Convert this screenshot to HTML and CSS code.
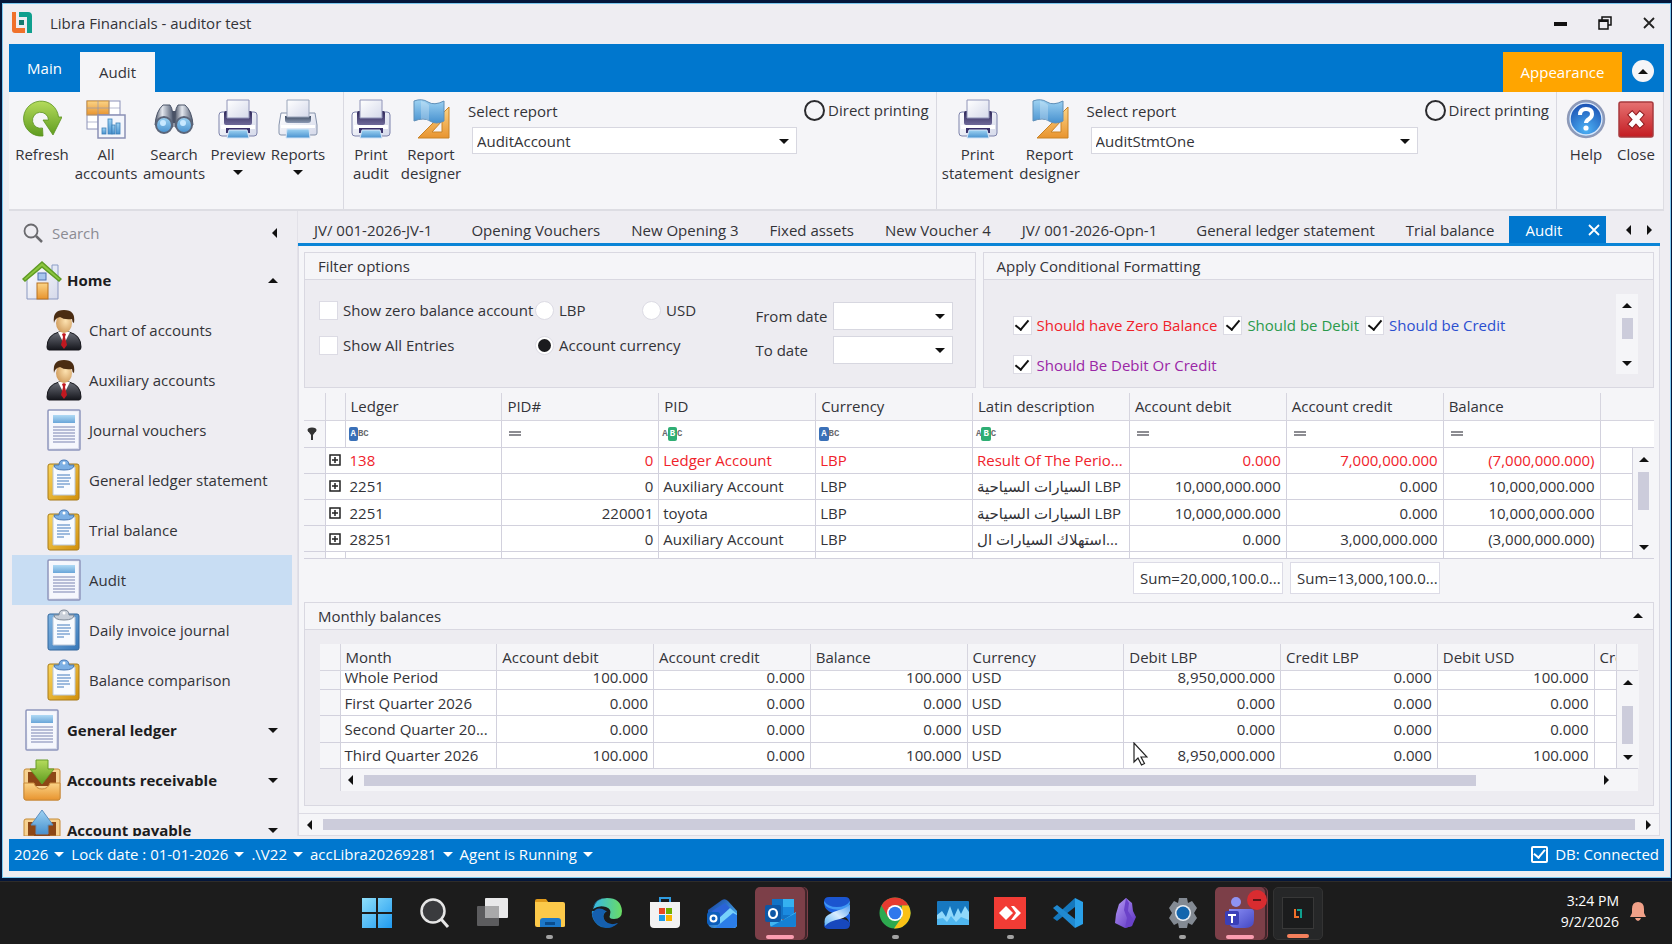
FILE: index.html
```html
<!DOCTYPE html>
<html lang="en">
<head>
<meta charset="utf-8">
<title>Libra Financials - auditor test</title>
<link rel="stylesheet" href="styles.css">
</head>
<body>
<svg class="defs" aria-hidden="true">
  <defs>
    <linearGradient id="gGreen" x1="0" y1="0" x2="0" y2="1"><stop offset="0" stop-color="#b5db5c"/><stop offset="1" stop-color="#5f9c1f"/></linearGradient>
    <linearGradient id="gPaper" x1="0" y1="0" x2="1" y2="1"><stop offset="0" stop-color="#ffffff"/><stop offset="1" stop-color="#d5d9ea"/></linearGradient>
    <linearGradient id="gBlue" x1="0" y1="0" x2="0" y2="1"><stop offset="0" stop-color="#9fd3f3"/><stop offset="1" stop-color="#4791cf"/></linearGradient>
    <linearGradient id="gDark" x1="0" y1="0" x2="0" y2="1"><stop offset="0" stop-color="#2d2657"/><stop offset="1" stop-color="#6f6a99"/></linearGradient>
    <linearGradient id="gSlate" x1="0" y1="0" x2="0" y2="1"><stop offset="0" stop-color="#3f4c63"/><stop offset="1" stop-color="#8b99b3"/></linearGradient>
    <linearGradient id="gSteel" x1="0" y1="0" x2="1" y2="0"><stop offset="0" stop-color="#4b5365"/><stop offset=".4" stop-color="#e4e8ef"/><stop offset="1" stop-color="#4d586e"/></linearGradient>
    <linearGradient id="gOrange" x1="0" y1="0" x2="0" y2="1"><stop offset="0" stop-color="#fbd487"/><stop offset="1" stop-color="#e8942f"/></linearGradient>
    <linearGradient id="gGold" x1="0" y1="0" x2="1" y2="1"><stop offset="0" stop-color="#fbd65c"/><stop offset="1" stop-color="#d08f0c"/></linearGradient>
    <linearGradient id="gClipBlue" x1="0" y1="0" x2="1" y2="1"><stop offset="0" stop-color="#7fb4e2"/><stop offset="1" stop-color="#3777b8"/></linearGradient>
    <linearGradient id="gRed" x1="0" y1="0" x2="0" y2="1"><stop offset="0" stop-color="#e67272"/><stop offset="1" stop-color="#c31c22"/></linearGradient>
    <radialGradient id="gHelp" cx=".5" cy=".8" r=".8"><stop offset="0" stop-color="#4db2f5"/><stop offset="1" stop-color="#1748ad"/></radialGradient>
    <radialGradient id="gFace" cx=".6" cy=".4" r=".6"><stop offset="0" stop-color="#fde2b0"/><stop offset="1" stop-color="#d3a163"/></radialGradient>
    <linearGradient id="gSuit" x1="0" y1="0" x2="0" y2="1"><stop offset="0" stop-color="#6b6e78"/><stop offset="1" stop-color="#15161c"/></linearGradient>
    <linearGradient id="gWin" x1="0" y1="0" x2="1" y2="1"><stop offset="0" stop-color="#8fe0fb"/><stop offset="1" stop-color="#1f9af0"/></linearGradient>
    <linearGradient id="gEdge" x1="0" y1="0" x2="1" y2="1"><stop offset="0" stop-color="#2aa3e0"/><stop offset="1" stop-color="#0a4a94"/></linearGradient>
    <linearGradient id="gEdge2" x1="0" y1="0" x2="1" y2="0"><stop offset="0" stop-color="#35b7e8"/><stop offset="1" stop-color="#6bdd62"/></linearGradient>
    <linearGradient id="gViolet" x1="0" y1="0" x2="1" y2="1"><stop offset="0" stop-color="#b79cf5"/><stop offset="1" stop-color="#5a2fc0"/></linearGradient>
    <linearGradient id="gTeams" x1="0" y1="0" x2="1" y2="1"><stop offset="0" stop-color="#8b8ff5"/><stop offset="1" stop-color="#4347c4"/></linearGradient>
    <linearGradient id="gMail" x1="0" y1="0" x2="1" y2="1"><stop offset="0" stop-color="#123a9e"/><stop offset="1" stop-color="#55c3fb"/></linearGradient>
    <linearGradient id="gHelix" x1="0" y1="1" x2="1" y2="0"><stop offset="0" stop-color="#5cb4f8"/><stop offset=".5" stop-color="#d8ecfd"/><stop offset="1" stop-color="#4b9bf2"/></linearGradient>
  </defs>
  <symbol id="logo" viewBox="0 0 22 22"><path d="M1 0h4v16h9v5H4q-3 0-3-3z" fill="#f0702a"/><path d="M8 0h9q4 0 4 4v17h-5V5H8z" fill="#0f9f8e"/><rect x="8" y="8" width="5" height="5" fill="#14796f"/></symbol>
  <symbol id="refresh" viewBox="0 0 40 40"><path d="M21 37A17.500 17.500 0 1 1 36.500 18H40L31 36 21 21h5.500a8 8 0 1 0-6 8z" fill="url(#gGreen)" stroke="#5a9220" stroke-width=".8"/></symbol>
  <symbol id="allacc" viewBox="0 0 40 40"><rect x="1" y="2" width="33" height="28" fill="#fff" stroke="#8c92b8"/><rect x="1" y="2" width="22" height="14" fill="url(#gOrange)" stroke="#cf9034"/><path d="M1 9h33M1 16h33M1 23h33M12 2v28M23 2v28" stroke="#8c92b8" stroke-width=".9" fill="none" opacity=".7"/><rect x="12" y="16" width="27" height="23" fill="#f4f6fc" stroke="#8a90b5" stroke-width="1.500"/><g fill="url(#gBlue)" stroke="#3c7fb8" stroke-width=".8"><rect x="16" y="29" width="4" height="6"/><rect x="22" y="20" width="4" height="15"/><rect x="26" y="26" width="3" height="9"/><rect x="30" y="24" width="4" height="11"/></g></symbol>
  <symbol id="binoc" viewBox="0 0 40 40"><rect x="15" y="12" width="10" height="12" fill="#4a5264"/><path d="M9 6h7q4 5 3 22L1 26Q2 12 9 6z" fill="url(#gSteel)" stroke="#4b5468"/><path d="M31 6h-7q-4 5-3 22l18-2Q38 12 31 6z" fill="url(#gSteel)" stroke="#4b5468"/><g fill="url(#gBlue)" stroke="#5b6579" stroke-width="2"><circle cx="10" cy="26" r="8"/><circle cx="30" cy="26" r="8"/></g><circle cx="9" cy="24" r="3" fill="#c7e8ff"/><circle cx="29" cy="24" r="3" fill="#c7e8ff"/></symbol>
  <symbol id="printer" viewBox="0 0 40 40"><rect x="1" y="13" width="38" height="24" rx="3" fill="url(#gPaper)" stroke="#7d82ab"/><rect x="6" y="12" width="28" height="14" rx="2" fill="url(#gDark)"/><path d="M9 1h22v18H9z" fill="url(#gPaper)" stroke="#9094b8"/><path d="M3 26h34v4H3z" fill="#fff"/><path d="M8 29h24v5H8z" fill="#393069"/><path d="M11 31h18l2 8H9z" fill="url(#gBlue)" stroke="#d4e4f6"/></symbol>
  <symbol id="printer2" viewBox="0 0 40 40"><path d="M3 14h34l2 12v8q0 2-2 2H3q-2 0-2-2v-8z" fill="url(#gPaper)" stroke="#8592ab"/><path d="M7 17h26v4q0 3-3 3H10q-3 0-3-3z" fill="url(#gSlate)"/><path d="M9 1h22v17H9z" fill="url(#gPaper)" stroke="#9aa5ba"/><path d="M3 26h34v3H3z" fill="#fff"/><path d="M9 30h22l1 9H8z" fill="url(#gBlue)" stroke="#d4e4f6"/></symbol>
  <symbol id="designer" viewBox="0 0 40 40"><path d="M38 8v31H7z" fill="url(#gOrange)" stroke="#c98327"/><path d="M31 22v11H21z" fill="#f5f5f8" stroke="#c98327"/><path d="M3 2q8-3 14 1t16-1v20q-8 4-14 0T3 22z" fill="url(#gBlue)" stroke="#5f8fb8"/><path d="M10 2q5 1 8 4v16q-4-3-8-2z" fill="#fff" opacity=".25"/></symbol>
  <symbol id="help" viewBox="0 0 40 40"><circle cx="20" cy="20" r="18" fill="url(#gHelp)" stroke="#8e9ab8" stroke-width="2.500"/><circle cx="20" cy="20" r="16" fill="none" stroke="#dce8f8" stroke-width="1.500"/><path d="M14 16q0-6 6-6t6 5q0 3-3 5t-3 4" fill="none" stroke="#fff" stroke-width="4"/><circle cx="20" cy="29" r="2.600" fill="#fff"/></symbol>
  <symbol id="close" viewBox="0 0 40 40"><rect x="3" y="3" width="34" height="35" rx="2" fill="url(#gRed)" stroke="#a83a3e" stroke-width="1.500"/><path d="m16 16 8 9m0-9-8 9" stroke="#8d1a1e" stroke-width="7" stroke-linecap="square"/><path d="m16 16 8 9m0-9-8 9" stroke="#fff" stroke-width="5" stroke-linecap="square"/></symbol>
  <symbol id="house" viewBox="0 0 40 42"><path d="M30 6h6v14h-6z" fill="#e3e8f5" stroke="#8b9cc6"/><path d="M5 20 20 5l16 15v20H5z" fill="url(#gPaper)" stroke="#8997c0"/><rect x="15" y="24" width="11" height="16" fill="url(#gOrange)" stroke="#b87220"/><rect x="16" y="14" width="8" height="7" fill="#a8c6ee" stroke="#4f6fae"/><path d="M1 20 20 3l19 17-2 2L20 8 3 22z" fill="#8cc63f" stroke="#5f9b24" stroke-width="1.500"/></symbol>
  <symbol id="person" viewBox="0 0 36 42"><path d="M1 38q0-12 12-15h10q12 3 12 15 0 3-2 3H3q-2 0-2-3z" fill="url(#gSuit)" stroke="#16171c"/><path d="m12 23 6 12 6-12z" fill="#fff"/><path d="m16 25 2-1 2 1-1 3 2 8-3 4-3-4 2-8z" fill="#c01820"/><ellipse cx="18" cy="14" rx="8" ry="10" fill="url(#gFace)"/><path d="M8 14Q6 1 18 1q12 0 10 13-2-1-2-4-8 1-12-2-5 1-6 6z" fill="#4a2c12"/></symbol>
  <symbol id="doc" viewBox="0 0 34 42"><rect x="1" y="1" width="32" height="40" rx="1" fill="url(#gPaper)" stroke="#8f96bd" stroke-width="1.500"/><rect x="3" y="3" width="28" height="36" fill="#f5f7fd"/><rect x="6" y="6" width="22" height="8" fill="url(#gBlue)" opacity=".8"/><path d="M6 18h22M6 21h22M6 24h22M6 27h22M6 30h22M6 33h22" stroke="#a3aaca" stroke-width="1.500"/></symbol>
  <symbol id="clip" viewBox="0 0 34 42"><rect x="1" y="5" width="31" height="36" rx="2" fill="url(#gGold)" stroke="#a87b18"/><path d="M6 8h22v28H6z" fill="#f8fbff" stroke="#b9c6d8"/><path d="M10 16h13M10 19h14M10 22h12M10 25h13M10 28h7" stroke="#7fa6d4" stroke-width="1.500"/><path d="M7 6h5q0-5 5-5t5 5h5q0 5-10 5T7 6z" fill="#7db0e4" stroke="#4779b6"/><circle cx="17" cy="4" r="1.500" fill="#fff"/></symbol>
  <symbol id="clipb" viewBox="0 0 34 42"><rect x="1" y="5" width="31" height="36" rx="2" fill="url(#gClipBlue)" stroke="#33669c"/><path d="M6 8h22v28H6z" fill="#f8fbff" stroke="#b9c6d8"/><path d="M10 16h13M10 19h14M10 22h12M10 25h13M10 28h7" stroke="#7fa6d4" stroke-width="1.500"/><path d="M7 6h5q0-5 5-5t5 5h5q0 5-10 5T7 6z" fill="#c9cfd8" stroke="#7d8896"/><circle cx="17" cy="4" r="1.500" fill="#fff"/></symbol>
  <symbol id="recv" viewBox="0 0 40 42"><rect x="2" y="10" width="36" height="31" rx="2" fill="#f7d291" stroke="#c58a36"/><rect x="6" y="13" width="28" height="14" fill="#8d4716"/><path d="M2 24h10q2 6 8 6t8-6h10v15q0 2-2 2H4q-2 0-2-2z" fill="url(#gOrange)" stroke="#c98a3a"/><path d="M14 1h12v9h6L20 25 8 10h6z" fill="url(#gGreen)" stroke="#679b28"/></symbol>
  <symbol id="pay" viewBox="0 0 40 42"><rect x="2" y="10" width="36" height="31" rx="2" fill="#f7d291" stroke="#c58a36"/><rect x="6" y="13" width="28" height="14" fill="#8d4716"/><path d="M2 27h10q2 6 8 6t8-6h10v12q0 2-2 2H4q-2 0-2-2z" fill="url(#gOrange)" stroke="#c98a3a"/><path d="m20 1 11 15h-5v9H14v-9H9z" fill="url(#gBlue)" stroke="#5d8fc0"/></symbol>
  <symbol id="plus" viewBox="0 0 12 12"><rect x="1" y="1" width="10" height="10" fill="#fff" stroke="#222" stroke-width="1.500"/><path d="M6 3v6M3 6h6" stroke="#222" stroke-width="1.500"/></symbol>
</svg>

<div class="window">
  <header class="titlebar">
    <svg class="logo"><use href="#logo"/></svg>
    <h1>Libra Financials - auditor test</h1>
    <div class="wincontrols">
      <button type="button" aria-label="Minimize"><svg viewBox="0 0 14 14"><path d="M0 8h13" stroke="#111" stroke-width="4"/></svg></button>
      <button type="button" aria-label="Restore"><svg viewBox="0 0 14 14"><path d="M4 4V1h9v8h-3M1 4h9v9H1z" fill="none" stroke="#111" stroke-width="1.500"/><path d="M1 5h9" stroke="#111" stroke-width="2"/></svg></button>
      <button type="button" aria-label="Close window"><svg viewBox="0 0 14 14"><path d="m2 2 10 10m0-10L2 12" stroke="#222" stroke-width="1.800"/></svg></button>
    </div>
  </header>

  <nav class="ribbon-tabs">
    <button type="button" class="rtab main">Main</button>
    <button type="button" class="rtab active">Audit</button>
    <button type="button" class="rtab appearance">Appearance</button>
    <button type="button" class="collapse" aria-label="Collapse ribbon"><i class="tri up"></i></button>
  </nav>

  <section class="ribbon">
    <div class="rgroup g1">
      <button type="button" class="rbtn w60"><svg><use href="#refresh"/></svg><span>Refresh</span></button>
      <button type="button" class="rbtn w68"><svg><use href="#allacc"/></svg><span>All<br>accounts</span></button>
      <button type="button" class="rbtn w68"><svg><use href="#binoc"/></svg><span>Search<br>amounts</span></button>
      <button type="button" class="rbtn w60"><svg><use href="#printer"/></svg><span>Preview</span><i class="tri down"></i></button>
      <button type="button" class="rbtn w60"><svg><use href="#printer2"/></svg><span>Reports</span><i class="tri down"></i></button>
    </div>
    <div class="rgroup g2">
      <button type="button" class="rbtn w54"><svg><use href="#printer"/></svg><span>Print<br>audit</span></button>
      <button type="button" class="rbtn w66"><svg><use href="#designer"/></svg><span>Report<br>designer</span></button>
      <div class="picker"><label for="rep1">Select report</label><div class="combo"><select id="rep1"><option>AuditAccount</option></select><i class="tri down"></i></div></div>
      <label class="direct"><input type="radio" name="d1">Direct printing</label>
    </div>
    <div class="rgroup g3">
      <button type="button" class="rbtn w78"><svg><use href="#printer"/></svg><span>Print<br>statement</span></button>
      <button type="button" class="rbtn w66"><svg><use href="#designer"/></svg><span>Report<br>designer</span></button>
      <div class="picker"><label for="rep2">Select report</label><div class="combo"><select id="rep2"><option>AuditStmtOne</option></select><i class="tri down"></i></div></div>
      <label class="direct"><input type="radio" name="d2">Direct printing</label>
    </div>
    <div class="rgroup g4">
      <button type="button" class="rbtn w50"><svg><use href="#help"/></svg><span>Help</span></button>
      <button type="button" class="rbtn w50"><svg><use href="#close"/></svg><span>Close</span></button>
    </div>
  </section>

  <div class="body">
    <aside class="sidebar">
      <div class="search">
        <svg viewBox="0 0 20 20"><circle cx="8" cy="8" r="6.500" fill="none" stroke="#6a6a6e" stroke-width="1.800"/><path d="m13 13 6 6" stroke="#6a6a6e" stroke-width="2.500"/></svg>
        <input type="text" placeholder="Search" aria-label="Search">
        <button type="button" aria-label="Collapse sidebar"><i class="tri left"></i></button>
      </div>
      <nav class="navlist">
        <button type="button" class="nav top"><svg><use href="#house"/></svg><span>Home</span><i class="tri up"></i></button>
        <a href="#" class="nav"><svg><use href="#person"/></svg><span>Chart of accounts</span></a>
        <a href="#" class="nav"><svg><use href="#person"/></svg><span>Auxiliary accounts</span></a>
        <a href="#" class="nav"><svg><use href="#doc"/></svg><span>Journal vouchers</span></a>
        <a href="#" class="nav"><svg><use href="#clip"/></svg><span>General ledger statement</span></a>
        <a href="#" class="nav"><svg><use href="#clip"/></svg><span>Trial balance</span></a>
        <a href="#" class="nav selected"><svg><use href="#doc"/></svg><span>Audit</span></a>
        <a href="#" class="nav"><svg><use href="#clipb"/></svg><span>Daily invoice journal</span></a>
        <a href="#" class="nav"><svg><use href="#clip"/></svg><span>Balance comparison</span></a>
        <button type="button" class="nav top"><svg><use href="#doc"/></svg><span>General ledger</span><i class="tri down"></i></button>
        <button type="button" class="nav top"><svg><use href="#recv"/></svg><span>Accounts receivable</span><i class="tri down"></i></button>
        <button type="button" class="nav top"><svg><use href="#pay"/></svg><span>Account payable</span><i class="tri down"></i></button>
      </nav>
    </aside>

    <main class="content">
      <nav class="tabs">
        <button type="button" class="voucher">JV/ 001-2026-JV-1</button>
        <button type="button">Opening Vouchers</button>
        <button type="button">New Opening 3</button>
        <button type="button">Fixed assets</button>
        <button type="button">New Voucher 4</button>
        <button type="button" class="voucher">JV/ 001-2026-Opn-1</button>
        <button type="button">General ledger statement</button>
        <button type="button">Trial balance</button>
        <button type="button" class="active">Audit <svg viewBox="0 0 12 12"><path d="m1 1 10 10M11 1 1 11" stroke="#fff" stroke-width="1.800"/></svg></button>
        <button type="button" class="arrow first" aria-label="Previous tabs"><i class="tri left"></i></button>
        <button type="button" class="arrow" aria-label="Next tabs"><i class="tri right"></i></button>
      </nav>

      <div class="page">
        <div class="panels">
          <section class="panel">
            <h2>Filter options</h2>
            <div class="filter">
              <div class="stack">
                <label class="opt"><input type="checkbox">Show zero balance account</label>
                <label class="opt"><input type="checkbox">Show All Entries</label>
              </div>
              <div class="stack">
                <div class="pair"><label class="opt"><input type="radio" name="cur">LBP</label><label class="opt"><input type="radio" name="cur">USD</label></div>
                <label class="opt"><input type="radio" name="cur" checked>Account currency</label>
              </div>
              <div class="dates">
                <label for="from">From date</label><div class="combo"><select id="from"><option></option></select><i class="tri down"></i></div>
                <label for="to">To date</label><div class="combo"><select id="to"><option></option></select><i class="tri down"></i></div>
              </div>
            </div>
          </section>
          <section class="panel">
            <h2>Apply Conditional Formatting</h2>
            <div class="formatting">
              <div class="rules">
                <label class="opt red"><input type="checkbox" checked>Should have Zero Balance</label>
                <label class="opt green"><input type="checkbox" checked>Should be Debit</label>
                <label class="opt blue"><input type="checkbox" checked>Should be Credit</label>
                <label class="opt purple"><input type="checkbox" checked>Should Be Debit Or Credit</label>
              </div>
              <div class="vscroll"><i class="tri up"></i><i class="thumb short"></i><i class="tri down"></i></div>
            </div>
          </section>
        </div>

        <table class="grid accounts">
          <colgroup><col class="c21"><col class="c20"><col><col><col><col><col><col><col><col><col class="c32"><col class="c22"></colgroup>
          <thead>
            <tr><th></th><th></th><th>Ledger</th><th>PID#</th><th>PID</th><th>Currency</th><th>Latin description</th><th>Account debit</th><th>Account credit</th><th>Balance</th><th colspan="2" class="last"></th></tr>
            <tr class="frow"><td class="ind"><svg class="funnel" viewBox="0 0 10 14"><ellipse cx="5" cy="3" rx="4.500" ry="2.500" fill="#333"/><path d="M1 4h8L6 8v5H4V8z" fill="#333"/></svg></td><td></td><td><span class="abc"><b class="fb">A</b>BC</span></td><td><span class="eq"></span></td><td><span class="abc">A<b class="fg">B</b>C</span></td><td><span class="abc"><b class="fb">A</b>BC</span></td><td><span class="abc">A<b class="fg">B</b>C</span></td><td><span class="eq"></span></td><td><span class="eq"></span></td><td><span class="eq"></span></td><td colspan="2" class="last"></td></tr>
          </thead>
          <tbody>
            <tr class="red"><td class="ind"></td><td class="exp"><svg><use href="#plus"/></svg></td><td>138</td><td class="n">0</td><td>Ledger Account</td><td>LBP</td><td>Result Of The Perio...</td><td class="n">0.000</td><td class="n">7,000,000.000</td><td class="n">(7,000,000.000)</td><td></td><td rowspan="5" class="sb"><div class="vscroll tall"><i class="tri up"></i><i class="thumb"></i><i class="tri down"></i></div></td></tr>
            <tr><td class="ind"></td><td class="exp"><svg><use href="#plus"/></svg></td><td>2251</td><td class="n">0</td><td>Auxiliary Account</td><td>LBP</td><td>السيارات السياحية LBP</td><td class="n">10,000,000.000</td><td class="n">0.000</td><td class="n">10,000,000.000</td><td></td></tr>
            <tr><td class="ind"></td><td class="exp"><svg><use href="#plus"/></svg></td><td>2251</td><td class="n">220001</td><td>toyota</td><td>LBP</td><td>السيارات السياحية LBP</td><td class="n">10,000,000.000</td><td class="n">0.000</td><td class="n">10,000,000.000</td><td></td></tr>
            <tr><td class="ind"></td><td class="exp"><svg><use href="#plus"/></svg></td><td>28251</td><td class="n">0</td><td>Auxiliary Account</td><td>LBP</td><td>استهلاك السيارات ال...</td><td class="n">0.000</td><td class="n">3,000,000.000</td><td class="n">(3,000,000.000)</td><td></td></tr>
            <tr class="stub"><td class="ind"></td><td></td><td></td><td></td><td></td><td></td><td></td><td></td><td></td><td></td><td></td></tr>
          </tbody>
        </table>
        <div class="sums">
          <output class="sum s1">Sum=20,000,100.0...</output>
          <output class="sum s2">Sum=13,000,100.0...</output>
        </div>

        <section class="panel monthly">
          <h2>Monthly balances<i class="tri up"></i></h2>
          <div class="mbody">
            <table class="grid months">
              <colgroup><col class="c20"><col><col><col><col><col><col><col><col><col class="c22"><col class="c22"></colgroup>
              <thead><tr><th></th><th>Month</th><th>Account debit</th><th>Account credit</th><th>Balance</th><th>Currency</th><th>Debit LBP</th><th>Credit LBP</th><th>Debit USD</th><th class="cut">Credit USD</th><th class="last"></th></tr></thead>
              <tbody>
                <tr class="clipped"><td class="ind"></td><td><div>Whole Period</div></td><td class="n"><div>100.000</div></td><td class="n"><div>0.000</div></td><td class="n"><div>100.000</div></td><td><div>USD</div></td><td class="n"><div>8,950,000.000</div></td><td class="n"><div>0.000</div></td><td class="n"><div>100.000</div></td><td></td><td rowspan="4" class="sb"><div class="vscroll mid"><i class="tri up"></i><i class="thumb"></i><i class="tri down"></i></div></td></tr>
                <tr><td class="ind"></td><td>First Quarter 2026</td><td class="n">0.000</td><td class="n">0.000</td><td class="n">0.000</td><td>USD</td><td class="n">0.000</td><td class="n">0.000</td><td class="n">0.000</td><td></td></tr>
                <tr><td class="ind"></td><td>Second Quarter 20...</td><td class="n">0.000</td><td class="n">0.000</td><td class="n">0.000</td><td>USD</td><td class="n">0.000</td><td class="n">0.000</td><td class="n">0.000</td><td></td></tr>
                <tr><td class="ind"></td><td>Third Quarter 2026</td><td class="n">100.000</td><td class="n">0.000</td><td class="n">100.000</td><td>USD</td><td class="n">8,950,000.000</td><td class="n">0.000</td><td class="n">100.000</td><td></td></tr>
              </tbody>
            </table>
            <div class="hscroll inner"><i class="tri left"></i><i class="track"><i class="bar"></i></i><i class="tri right"></i></div>
          </div>
        </section>
      </div>
      <div class="hscroll outer"><i class="tri left"></i><i class="track"><i class="bar"></i></i><i class="tri right"></i></div>
    </main>
  </div>

  <footer class="status">
    <button type="button">2026<i class="tri down"></i></button>
    <button type="button">Lock date : 01-01-2026<i class="tri down"></i></button>
    <button type="button">.\V22<i class="tri down"></i></button>
    <button type="button">accLibra20269281<i class="tri down"></i></button>
    <button type="button">Agent is Running<i class="tri down"></i></button>
    <label class="db"><input type="checkbox" checked>DB: Connected</label>
  </footer>
</div>

<svg class="cursor" viewBox="0 0 15 24" aria-hidden="true"><path d="M1 1v19l4-4 3.500 7 3-1.500L8 15h6z" fill="#fff" stroke="#222" stroke-width="1.200"/></svg>

<div class="taskbar">
  <div class="apps">
    <button type="button" aria-label="Start"><svg viewBox="0 0 32 32"><path d="M1 1h14v14H1zM17 1h14v14H17zM1 17h14v14H1zM17 17h14v14H17z" fill="url(#gWin)"/></svg></button>
    <button type="button" aria-label="Search Windows"><svg viewBox="0 0 32 32"><circle cx="14" cy="14" r="11.500" fill="#3a3b3e" stroke="#e6e6e6" stroke-width="2.500"/><path d="m22 22 7 8" stroke="#e6e6e6" stroke-width="3"/></svg></button>
    <button type="button" aria-label="Task view"><svg viewBox="0 0 32 32"><rect x="1" y="9" width="22" height="20" rx="1" fill="#5c5c5e"/><rect x="9" y="1" width="23" height="20" rx="1" fill="#e9e9ea"/><path d="M9 9h14v12H9z" fill="#a9a9aa"/></svg></button>
    <button type="button" aria-label="File Explorer" class="dot"><svg viewBox="0 0 32 32"><path d="M1 4q0-2 2-2h9l3 4H1z" fill="#e09a1a"/><path d="M1 5h28q2 0 2 2v22q0 1-2 1H3q-2 0-2-2z" fill="#fcc94a"/><path d="M6 30v-6q0-3 3-3h15q3 0 3 3v6z" fill="#1c78c9"/><path d="M11 25h10v3H11z" fill="#0a4c8c"/></svg></button>
    <button type="button" aria-label="Edge"><svg viewBox="0 0 32 32"><path d="M16 1a15 15 0 1 0 11 25q-8 4-13-2-4-6 2-10H1Q3 1 16 1z" fill="url(#gEdge)"/><path d="M1 17a15.500 15.500 0 0 0 26 9q-8 3-13-2-4-6 1-10Q6 8 1 17z" fill="#155fae"/><path d="M2 12Q5 1 16 1q14 0 15 13 0 8-8 8-6 0-4-4 2-6-4-8-7-2-13 2z" fill="url(#gEdge2)"/></svg></button>
    <button type="button" aria-label="Store"><svg viewBox="0 0 32 32"><path d="M11 7V1h10v6" fill="none" stroke="#2f9be0" stroke-width="2"/><path d="M1 5h30v22q0 4-4 4H5q-4 0-4-4z" fill="#f2f2f2"/><path d="M10 11h6v6h-6z" fill="#e74825"/><path d="M17 11h6v6h-6z" fill="#70b000"/><path d="M10 18h6v6h-6z" fill="#1a9be8"/><path d="M17 18h6v6h-6z" fill="#f8b400"/></svg></button>
    <button type="button" aria-label="Outlook"><svg viewBox="0 0 32 32"><path d="M2 13 16 3q3-2 6 1l9 10v13q0 4-4 4H8q-6 0-6-6z" fill="url(#gMail)"/><path d="m6 14 13-8 6 6-12 14z" fill="#2a63d8"/><path d="m12 22 12-11 7 6v10q0 4-4 4H12z" fill="#77d0fb"/><path d="m9 31 18-15 4 2v9q0 4-4 4z" fill="#2b7de8"/><rect x="1" y="15" width="13" height="13" rx="3" fill="#0c5dbb"/><circle cx="7.500" cy="21.500" r="3" fill="none" stroke="#fff" stroke-width="2"/></svg></button>
    <button type="button" aria-label="Outlook classic" class="hot"><svg viewBox="0 0 32 32"><path d="M8 2h22v20H8z" fill="#1273c6"/><path d="M19 2h11v8H19z" fill="#35b1f0"/><path d="M19 10h11v8H19z" fill="#1a8ae0"/><path d="M6 15l13 8 13-8v13q0 2-2 2H8q-2 0-2-2z" fill="#40b5f2"/><path d="m6 30 26-14v12q0 2-2 2z" fill="#1580d4"/><rect x="1" y="8" width="16" height="17" rx="2" fill="#0d57a6"/><ellipse cx="9" cy="16.500" rx="4" ry="4.500" fill="none" stroke="#fff" stroke-width="2.200"/></svg></button>
    <button type="button" aria-label="Helix"><svg viewBox="0 0 32 32"><path d="M3 5q0 10 13 12 11 2 13 10V17q-4-5-11-6Q8 9 3 5z" fill="#1a5fe0"/><path d="M3 5q0-5 5-5h16q5 0 5 5-1 4-6 5-10 2-17-2-2-1-3-3z" fill="#1b55d0"/><path d="M3 4q4 6 13 6 9 0 13-6 0 7-6 8-8 2-15-1-5-2-5-7z" fill="#3f97f3"/><path d="M3 28q0 4 5 4h16q5 0 5-5-1-4-7-5-8-1-14 2-4 1-5 4z" fill="#1748bd"/><path d="M29 7v7q-2 6-10 8-11 2-15 7-2-8 3-11 4-3 11-5 8-2 11-6z" fill="url(#gHelix)"/></svg></button>
    <button type="button" aria-label="Chrome" class="dot"><svg viewBox="0 0 32 32"><circle cx="16" cy="16" r="15.500" fill="#2da94f"/><path d="M2.500 8.500A15.500 15.500 0 0 1 29.500 8.500H16L9 20z" fill="#e53b30"/><path d="M29.500 8.500A15.500 15.500 0 0 1 15 31.500L23 20V8.500z" fill="#fbc116"/><circle cx="16" cy="16" r="8" fill="#fff"/><circle cx="16" cy="16" r="6.300" fill="#2f78ec"/></svg></button>
    <button type="button" aria-label="Performance"><svg viewBox="0 0 32 32"><rect y="4" width="32" height="24" rx="1" fill="#1778c0"/><path d="M0 18l5-4 4 6 4-11 4 11 4-9 3 6 4-8 4 6v12H0z" fill="#8fd8fb"/><path d="M0 22l6-1 4 4 4-6 5 6 5-5 8 3v5H0z" fill="#4fb6ef"/></svg></button>
    <button type="button" aria-label="AnyDesk" class="dot"><svg viewBox="0 0 32 32"><rect width="32" height="32" fill="#f23c35"/><path d="m12 9 7 7-7 7-7-7z" fill="#fff"/><path d="m17 9 3 0 7 7-7 7h-3l5-7z" fill="#fff"/></svg></button>
    <button type="button" aria-label="Code"><svg viewBox="0 0 32 32"><path d="m23 1 8 4v22l-8 4z" fill="#2aa0e8"/><path d="M23 1v9L5 24l-4-3z" fill="#1478bd"/><path d="M23 31v-9L5 8l-4 3z" fill="#2089d0"/></svg></button>
    <button type="button" aria-label="Obsidian"><svg viewBox="0 0 32 32"><path d="m17 1 6 5 1 8 3 6-4 9-7 2-10-5 1-9 3-10z" fill="url(#gViolet)"/><path d="m17 1-2 12 3 8-2 10 7-2 1-7-5-8 1-8z" fill="#6b42c9"/></svg></button>
    <button type="button" aria-label="Settings" class="dot"><svg viewBox="0 0 32 32"><path d="M12 1h8l1 5 4-2 5 7-3 5 3 5-5 7-4-2-1 5h-8l-1-5-4 2-5-7 3-5-3-5 5-7 4 2z" fill="#838a93"/><circle cx="16" cy="16" r="8" fill="#e9edf2"/><circle cx="16" cy="16" r="6.500" fill="#1365ad"/></svg></button>
    <button type="button" aria-label="Teams" class="hot"><svg viewBox="0 0 32 32"><circle cx="12" cy="5" r="5" fill="#8f93f2"/><path d="M5 12h22q3 0 3 3v8q0 8-9 8H12q-7 0-7-8z" fill="url(#gTeams)"/><rect x="1" y="14" width="14" height="14" rx="2" fill="#3a3fb8"/><path d="M4 18h8M8 18v8" stroke="#fff" stroke-width="2"/></svg><span class="badge"></span></button>
    <button type="button" aria-label="Libra" class="cold"><svg viewBox="0 0 32 32"><rect x=".5" y=".5" width="31" height="31" fill="#1b1c1d" stroke="#383838"/><path d="M12 12h2v7h3v2h-5z" fill="#f0702a"/><path d="M15 12h5v9h-2v-7h-3z" fill="#0f9f8e"/></svg></button>
  </div>
  <div class="tray"><time>3:24 PM<br>9/2/2026</time><svg viewBox="0 0 18 20"><path d="M9 1q6 0 6 7v4l2 4H1l2-4V8q0-7 6-7z" fill="#f0a088"/><path d="M6 17h6q-1 3-3 3t-3-3z" fill="#f0a088"/></svg></div>
</div>
</body>
</html>
```
FILE: styles.css
```css
* { box-sizing: border-box; }
body { margin: 0; min-height: 100vh; display: flex; flex-direction: column; background: #04163a; color: #333338; font: 15px/20px "Open Sans", "Noto Sans", "DejaVu Sans", sans-serif; }
button, input, select { font: inherit; color: inherit; margin: 0; }
button { background: none; border: 0; padding: 0; }
a { color: inherit; text-decoration: none; }
i { font-style: normal; }
.defs { position: absolute; width: 0; height: 0; }

.tri { display: block; flex: none; width: 0; height: 0; border: 5px solid transparent; }
.tri.up { border-top: 0; border-bottom-color: #111; }
.tri.down { border-bottom: 0; border-top-color: #111; }
.tri.left { border-left: 0; border-right-color: #111; }
.tri.right { border-right: 0; border-left-color: #111; }

.window { flex: 1; display: flex; flex-direction: column; margin: 3px 1px 3px 2px; padding: 0 6px 6px; background: #eeedf2; border: 1px solid #7cc8f0; }
.titlebar { display: flex; align-items: center; height: 40px; padding: 0 8px 2px 2px; }
.logo { width: 22px; height: 22px; }
h1 { flex: 1; margin: 0 0 0 17px; font-size: 15px; font-weight: 400; }
.wincontrols { display: flex; gap: 30px; }
.wincontrols svg { display: block; width: 14px; height: 14px; }

.ribbon-tabs { display: flex; align-items: flex-end; height: 48px; background: #0077ce; color: #fff; }
.rtab { height: 40px; line-height: 40px; text-align: center; }
.rtab.main { width: 71px; height: 48px; }
.rtab.active { width: 75px; background: #f5f5f8; color: #333338; }
.rtab.appearance { width: 119px; margin-left: auto; background: #ffa500; }
.collapse { display: grid; place-items: center; width: 22px; height: 22px; margin: 0 10px 10px; border-radius: 50%; background: #f5f5f8; }

.ribbon { display: flex; height: 119px; background: #f5f5f8; border-bottom: 2px solid #dddde3; }
.rgroup { display: flex; align-items: flex-start; padding-top: 7px; border-right: 1px solid #d9d9e1; }
.g1 { width: 335px; padding-left: 3px; }
.g2 { flex: 594 1 0; }
.g3 { flex: 620 1 0; padding-left: 2px; }
.g4 { width: 107px; padding-left: 4px; border-right: 1px solid #dddde3; }
.rbtn { display: flex; flex-direction: column; align-items: center; line-height: 19px; }
.rbtn svg { width: 40px; height: 40px; margin-bottom: 6px; }
.rbtn .tri { margin-top: 6px; }
.w50 { width: 50px; } .w54 { width: 54px; } .w60 { width: 60px; } .w66 { width: 66px; } .w68 { width: 68px; } .w78 { width: 78px; }
.picker { flex: 1; margin-left: 4px; }
.picker label { display: block; margin: 2px 0 6px; line-height: 20px; }
.combo { position: relative; height: 27px; }
.picker .combo { margin-left: 4px; }
.combo select { appearance: none; display: block; width: 100%; height: 100%; padding: 0 4px; background: #fff; border: 1px solid #d7d7e0; border-radius: 0; }
.combo .tri { position: absolute; right: 8px; top: 50%; margin-top: -2px; pointer-events: none; }
.direct { display: flex; align-items: center; gap: 3px; padding: 0 7px; white-space: nowrap; line-height: 22px; }
.direct input { appearance: none; width: 21px; height: 21px; border: 2px solid #2b2b2e; border-radius: 50%; }

.body { flex: 1; display: flex; padding-bottom: 3px; }
.sidebar { width: 289px; display: flex; flex-direction: column; padding-left: 3px; border-right: 1px solid #e2e1e8; }
.search { display: flex; align-items: center; gap: 9px; height: 44px; padding: 0 20px 0 11px; }
.search svg { width: 20px; height: 20px; }
.search input { flex: 1; min-width: 0; border: 0; padding: 0; background: none; }
.search input::placeholder { color: #8b8b92; opacity: 1; }
.navlist { flex: 1 0 0; min-height: 580px; height: 580px; margin-right: 5px; overflow: hidden; }
.nav { display: flex; align-items: center; width: 100%; height: 50px; padding-left: 34px; text-align: left; }
.nav svg { width: 36px; height: 42px; margin-right: 7px; }
.nav.selected { background: #c8ddf3; }
.nav.top { padding: 0 14px 0 10px; font-weight: 700; color: #1c1c20; }
.nav.top svg { width: 40px; margin-right: 5px; }
.nav.top .tri { margin-left: auto; }

.content { flex: 1; min-width: 0; display: flex; flex-direction: column; padding-right: 4px; }
.tabs { display: flex; height: 35px; padding-top: 5px; border-bottom: 3px solid #0a84d6; white-space: nowrap; }
.tabs button { padding: 0 15px 0 16px; line-height: 28px; }
.tabs .voucher { padding-right: 23px; }
.tabs button.active { display: flex; align-items: center; gap: 26px; margin-left: auto; padding: 0 6px 0 16px; background: #0077ce; color: #fff; }
.tabs svg { width: 12px; height: 12px; }
.tabs .arrow { width: 22px; padding: 0 8px; }
.tabs .first { margin-left: 12px; }

.page { flex: 1; padding: 6px 5px; background: #f5f5f8; border: 1px solid #dcdbe4; border-top: 0; }
.panels { display: grid; grid-template-columns: 1fr 1fr; gap: 7px; }
.panel { border: 1px solid #d9d8e1; background: #edecf1; }
h2 { display: flex; align-items: center; justify-content: space-between; height: 27px; margin: 0; padding: 0 10px 0 13px; background: #f5f5f8; border-bottom: 1px solid #d9d8e1; font-size: 15px; font-weight: 400; }
.filter { display: grid; grid-template-columns: 214px 1fr 197px; column-gap: 2px; height: 107px; padding: 20px 22px 0 14px; }
.stack { display: flex; flex-direction: column; gap: 15px; min-width: 0; }
.opt { display: flex; align-items: center; gap: 5px; height: 20px; white-space: nowrap; }
.opt input { appearance: none; flex: none; width: 19px; height: 19px; background: #fff; border: 1px solid #dcdbe4; display: grid; place-items: center; }
.opt input[type=radio] { border-radius: 50%; }
.opt input[type=radio]:checked::after { content: ""; width: 13px; height: 13px; border-radius: 50%; background: #1b1b1e; }
.opt input[type=checkbox]:checked::after { content: ""; width: 6px; height: 11px; margin-top: -3px; border: solid #111; border-width: 0 2px 2px 0; transform: rotate(40deg); }
.pair { display: grid; grid-template-columns: 107px 1fr; }
.dates { display: grid; grid-template-columns: 77px 1fr; grid-auto-rows: 28px; row-gap: 6px; align-items: center; padding-top: 2px; white-space: nowrap; }
.dates .combo { height: 28px; }
.formatting { display: flex; height: 107px; padding: 14px 15px 13px 29px; }
.rules { flex: 1; display: flex; flex-wrap: wrap; align-content: flex-start; column-gap: 6px; padding-top: 11px; overflow: hidden; }
.rules .opt { height: 40px; }
.rules .purple { flex-basis: 100%; height: 29px; padding-top: 0; margin-top: 5px; }
.red { color: #f0222b; } .green { color: #2a9a4b; } .blue { color: #2b4fd0; } .purple { color: #9a26a6; }
.vscroll { display: flex; flex-direction: column; align-items: center; width: 22px; height: 80px; padding: 9px 0 8px; background: #f5f5f8; }
.thumb { width: 11px; height: 38px; margin: 10px 0 auto; background: #ccccdb; }
.thumb.short { height: 21px; }

.grid { width: 100%; table-layout: fixed; border-collapse: collapse; }
.c20 { width: 20px; } .c21 { width: 21px; } .c22 { width: 22px; } .c32 { width: 32px; }
.grid th { height: 27px; padding: 0 5px; border-right: 1px solid #d6d5df; border-bottom: 1px solid #d6d5df; font-weight: 400; text-align: left; white-space: nowrap; background: #f5f5f8; }
.grid td { height: 26px; padding: 0 5px 0 4px; border-right: 1px solid #d2d1dd; border-bottom: 1px solid #d2d1dd; background: #fff; white-space: nowrap; line-height: 20px; }
.grid .n { text-align: right; }
.grid .ind { background: #f5f5f8; padding: 0 5px; }
.grid .exp { padding: 0 0 0 3px; border-right-color: #fff; }
.exp svg { display: block; width: 12px; height: 12px; }
.grid .last { border-right: 0; }
.grid .sb { padding: 0; border-right: 0; background: #f5f5f8; vertical-align: top; }
.accounts { margin-top: 5px; }
.grid .frow td { height: 27px; padding-left: 3px; }
.funnel { display: block; width: 10px; height: 14px; }
.abc { display: flex; align-items: center; font: 700 9px/14px "Liberation Mono", monospace; color: #6b6b70; }
.abc b { padding: 0 2px; border-radius: 2px; color: #fff; }
.fb { background: #3a70b8; } .fg { background: #2fae74; }
.eq { display: block; width: 12px; height: 5px; margin-left: 4px; border: solid #8d8d92; border-width: 2px 0; }
.grid .stub td { height: 6px; }
.vscroll.tall { height: 110px; }
.sums { display: grid; grid-template-columns: 1fr 150px 150px; column-gap: 7px; height: 43px; padding: 3px 214px 0 0; }
.sum { height: 32px; padding: 0 6px; background: #fff; border: 1px solid #dcdbe6; line-height: 30px; white-space: nowrap; }
.s1 { grid-column: 2; }

.mbody { padding: 14px 15px; }
.months thead th { background: #f5f5f8; }
.grid .cut { padding-right: 0; overflow: hidden; }
.clipped div { display: flex; flex-direction: column; justify-content: flex-end; height: 18px; overflow: hidden; line-height: 24px; }
.grid .clipped td { height: 19px; }
.vscroll.mid { height: 97px; }
.mid .thumb { margin-top: 21px; }
.hscroll { display: flex; align-items: center; background: #f5f5f8; }
.track { flex: 1; }
.bar { display: block; height: 11px; background: #ccccdb; }
.inner { height: 22px; padding: 0 29px 0 7px; margin-left: 20px; border-left: 1px solid #d6d5df; }
.inner .track { margin: 0 6px 0 11px; padding-right: 122px; }
.outer { height: 22px; padding: 0 8px; border: 1px solid #dcdbe4; border-top: 0; }
.outer .track { margin: 0 11px; }

.status { display: flex; align-items: center; gap: 7px; height: 32px; padding: 0 5px 2px; background: #0077ce; color: #fff; }
.status button { display: flex; align-items: center; gap: 6px; }
.status .tri { border-top-color: #fff; }
.db { display: flex; align-items: center; gap: 7px; margin-left: auto; }
.db input { appearance: none; display: grid; place-items: center; width: 17px; height: 17px; border: 2px solid #fff; border-radius: 2px; }
.db input::after { content: ""; width: 5px; height: 9px; margin-top: -3px; border: solid #fff; border-width: 0 2px 2px 0; transform: rotate(40deg); }
.cursor { position: absolute; left: 1133px; top: 742px; width: 15px; height: 24px; }

.taskbar { position: relative; display: flex; justify-content: center; height: 63px; background: #1c1c1c; border-top: 1px solid #2e2c2a; color: #fff; }
.apps { display: grid; grid-template-columns: repeat(17, 1fr); width: 978px; margin-left: 3px; justify-items: center; align-items: center; }
.apps button { position: relative; display: grid; place-items: center; width: 50px; height: 53px; border-radius: 5px; }
.apps svg { width: 32px; height: 32px; }
.apps .hot { background: #7c3f48; box-shadow: 2px 0 0 #40252a, 3px 0 0 #7c3f48; }
.apps .cold { background: #262728; border: 1px solid #333; }
.dot::after, .hot::after, .cold::after { content: ""; position: absolute; bottom: 1px; width: 7px; height: 4px; border-radius: 2px; background: #a2a2a2; }
.hot::after { width: 28px; background: #fb9db0; }
.cold::after { width: 22px; background: #f5805c; }
.badge { position: absolute; right: -2px; top: 3px; width: 20px; height: 20px; border-radius: 50%; background: #d92c30; }
.badge::after { content: ""; position: absolute; left: 6px; top: 9px; width: 8px; height: 2px; background: #5c1517; }
.tray { position: absolute; right: 25px; top: 8px; display: flex; align-items: center; gap: 10px; text-align: right; font-size: 14px; line-height: 21px; }
.tray svg { width: 18px; height: 20px; }
```
